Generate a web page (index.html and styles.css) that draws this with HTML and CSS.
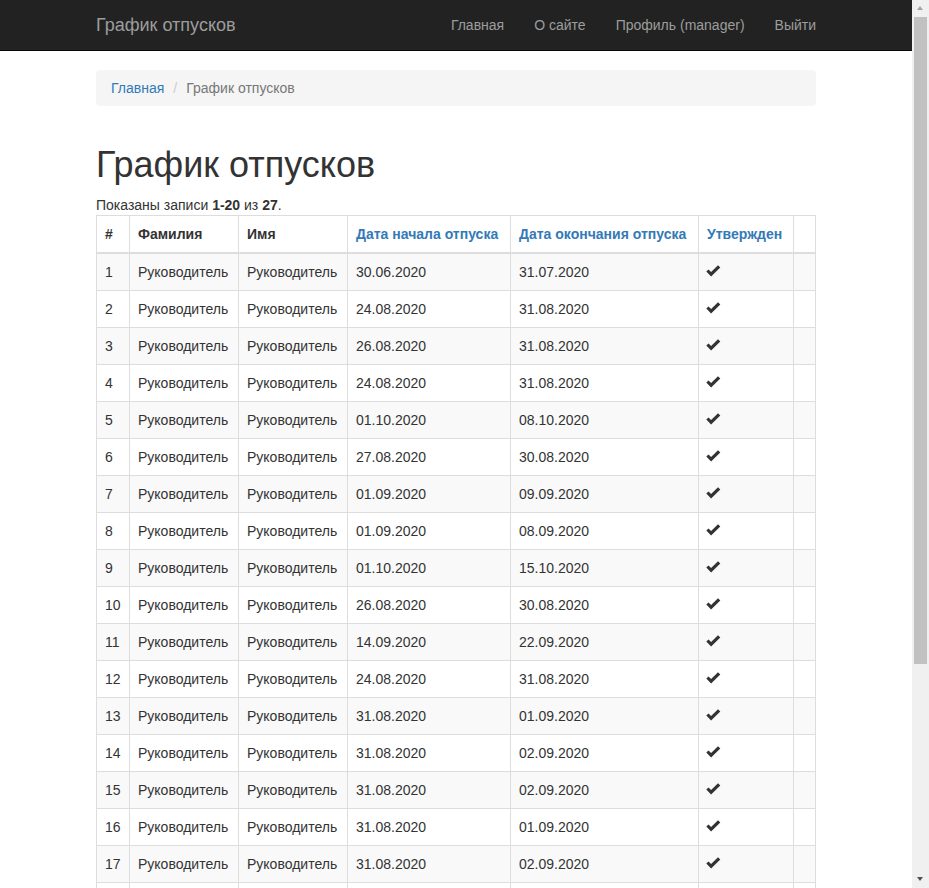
FILE: index.html
```html
<!DOCTYPE html>
<html lang="ru">
<head>
<meta charset="utf-8">
<title>График отпусков</title>
<link rel="stylesheet" href="styles.css">
</head>
<body>
<div class="wrap">
  <nav class="navbar">
    <div class="container navbar-inner">
      <a class="navbar-brand" href="#">График отпусков</a>
      <ul class="navbar-nav">
        <li><a href="#">Главная</a></li>
        <li><a href="#">О сайте</a></li>
        <li><a href="#">Профиль (manager)</a></li>
        <li><a href="#">Выйти</a></li>
      </ul>
    </div>
  </nav>
  <div class="container content">
    <ul class="breadcrumb">
      <li><a href="#">Главная</a></li>
      <li class="active">График отпусков</li>
    </ul>
    <div class="vacation-index">
      <h1>График отпусков</h1>
      <div class="grid-view">
        <div class="summary">Показаны записи <b>1-20</b> из <b>27</b>.</div>
        <table class="table">
          <thead>
            <tr>
              <th class="c-num">#</th>
              <th class="c-fam">Фамилия</th>
              <th class="c-name">Имя</th>
              <th class="c-start"><a href="#">Дата начала отпуска</a></th>
              <th class="c-end"><a href="#">Дата окончания отпуска</a></th>
              <th class="c-ok"><a href="#">Утвержден</a></th>
              <th class="c-act"></th>
            </tr>
          </thead>
          <tbody id="rows"></tbody>
        </table>
      </div>
    </div>
  </div>
</div>
<div class="scrollbar">
  <div class="sb-arrow sb-up"></div>
  <div class="sb-thumb"></div>
  <div class="sb-arrow sb-down"></div>
</div>
<script>
  var data = [
    ["30.06.2020","31.07.2020"],["24.08.2020","31.08.2020"],["26.08.2020","31.08.2020"],
    ["24.08.2020","31.08.2020"],["01.10.2020","08.10.2020"],["27.08.2020","30.08.2020"],
    ["01.09.2020","09.09.2020"],["01.09.2020","08.09.2020"],["01.10.2020","15.10.2020"],
    ["26.08.2020","30.08.2020"],["14.09.2020","22.09.2020"],["24.08.2020","31.08.2020"],
    ["31.08.2020","01.09.2020"],["31.08.2020","02.09.2020"],["31.08.2020","02.09.2020"],
    ["31.08.2020","01.09.2020"],["31.08.2020","02.09.2020"],["31.08.2020","02.09.2020"],
    ["31.08.2020","01.09.2020"],["31.08.2020","02.09.2020"]
  ];
  var check = '<svg class="ok" width="15" height="12" viewBox="0 0 15 12"><path d="M0.3 6.6 L2.5 4.4 L5.1 7 L12 0.3 L14.3 2.5 L5.1 11.4 Z" fill="#333"/></svg>';
  var html = "";
  data.forEach(function (d, i) {
    html += "<tr><td>" + (i + 1) + "</td><td>Руководитель</td><td>Руководитель</td><td>" + d[0] + "</td><td>" + d[1] + "</td><td>" + check + "</td><td></td></tr>";
  });
  document.getElementById("rows").innerHTML = html;
</script>
</body>
</html>
```

FILE: styles.css
```css
* { box-sizing: border-box; }
html { overflow: hidden; }
body {
  margin: 0 17px 0 0;
  font-family: "Liberation Sans", Arial, Helvetica, sans-serif;
  font-size: 14px;
  line-height: 1.42857143;
  color: #333;
  background: #fff;
}
a { color: #337ab7; text-decoration: none; }
.wrap { padding-bottom: 60px; }
.container {
  width: 750px;
  margin: 0 auto;
  padding: 0 15px;
}
.navbar {
  position: fixed;
  top: 0; left: 0; right: 17px;
  height: 51px;
  background: #222;
  border-bottom: 1px solid #080808;
  z-index: 10;
}
.navbar-inner {
  display: flex;
  justify-content: space-between;
  align-items: stretch;
  height: 50px;
}
.navbar-brand {
  margin-left: -15px;
  padding: 15px;
  font-size: 18px;
  line-height: 20px;
  color: #9d9d9d;
}
.navbar-nav {
  display: flex;
  margin: 0 -15px 0 0;
  padding: 0;
  list-style: none;
}
.navbar-nav a {
  display: block;
  padding: 15px;
  line-height: 20px;
  color: #9d9d9d;
}
.content { padding-top: 70px; }
.breadcrumb {
  margin: 0 0 20px;
  padding: 8px 15px;
  list-style: none;
  background: #f5f5f5;
  border-radius: 4px;
  display: flex;
}
.breadcrumb li + li { margin-left: 4px; }
.breadcrumb li + li::before {
  content: "/";
  padding: 0 5px;
  margin-right: 4px;
  color: #ccc;
}
.breadcrumb .active { color: #777; }
h1 {
  margin: 39px 0 10px;
  font-size: 36px;
  font-weight: 500;
  line-height: 1.1;
}
.table {
  width: 100%;
  border-collapse: collapse;
  border: 1px solid #ddd;
  margin-bottom: 20px;
}
.table th, .table td {
  padding: 8px;
  border: 1px solid #ddd;
  text-align: left;
  vertical-align: top;
  line-height: 20px;
}
.table th { font-weight: bold; vertical-align: bottom; }
.table thead th { border-bottom-width: 2px; }
.table tbody tr:nth-child(odd) { background: #f9f9f9; }
.c-num { width: 33px; }
.c-fam { width: 109px; }
.c-name { width: 109px; }
.c-start { width: 163px; }
.c-end { width: 188px; }
.c-ok { width: 95px; }
.ok { display: block; margin-top: 3px; margin-left: -1px; }

.scrollbar {
  position: fixed;
  top: 0; right: 0; bottom: 0;
  width: 17px;
  background: #f0f0f0;
  display: flex;
  flex-direction: column;
  align-items: center;
  z-index: 20;
}
.sb-arrow {
  width: 17px;
  height: 17px;
  position: relative;
  flex: none;
}
.sb-arrow::after {
  content: "";
  position: absolute;
  left: 5px;
  border-left: 3.5px solid transparent;
  border-right: 3.5px solid transparent;
}
.sb-up::after { top: 6px; border-bottom: 4px solid #a3a3a3; }
.sb-down { margin-top: auto; }
.sb-down::after { top: 6px; border-top: 4px solid #505050; }
.sb-thumb {
  width: 13px;
  height: 647px;
  background: #c1c1c1;
  flex: none;
}
```
